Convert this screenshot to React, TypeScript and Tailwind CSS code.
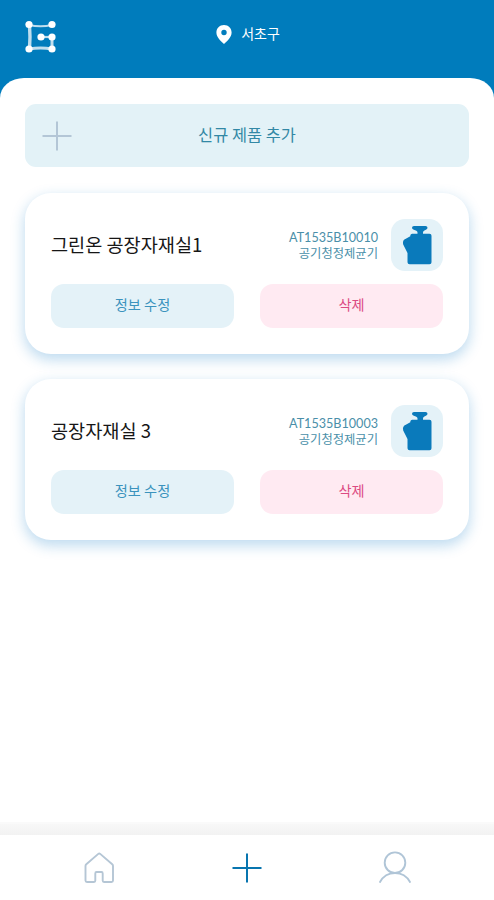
import React from 'react';

interface Product {
  name: string;
  serial: string;
  category: string;
}

const products: Product[] = [
  { name: '그린온 공장자재실1', serial: 'AT1535B10010', category: '공기청정제균기' },
  { name: '공장자재실 3', serial: 'AT1535B10003', category: '공기청정제균기' },
];

const Logo = () => (
  <svg width="34" height="38" viewBox="0 0 34 38" className="block">
    <g fill="none" stroke="#fff" strokeOpacity="0.75">
      <path d="M6 7Q17.500 9.500 29 7" strokeWidth="2.200" />
      <path d="M6.500 7Q7.500 19 6.500 31" strokeWidth="3.400" />
      <path d="M6 31Q17.500 29 29 31" strokeWidth="3" />
      <path d="M29 31V19" strokeWidth="3" />
      <path d="M18 19H29" strokeWidth="2.200" />
    </g>
    <g fill="#fff">
      <circle cx="6" cy="6.500" r="3.600" />
      <circle cx="29" cy="6.500" r="3.600" />
      <circle cx="6" cy="31" r="3.600" />
      <circle cx="29" cy="31" r="3.600" />
      <circle cx="18" cy="19" r="3.600" />
      <circle cx="29" cy="19" r="3.600" />
    </g>
  </svg>
);

const PinIcon = () => (
  <svg width="16" height="19" viewBox="0 0 16 19" className="block">
    <path
      fill="#fff"
      fillRule="evenodd"
      d="M8 0C3.5 0 .4 3.3.4 7.5.4 12 4.5 16 8 19c3.500-3 7.600-7 7.600-11.500C15.600 3.300 12.500 0 8 0Zm0 4.800a2.700 2.700 0 1 1 0 5.400 2.700 2.700 0 0 1 0-5.400Z"
    />
  </svg>
);

const PlusIcon = ({ color, width }: { color: string; width: number }) => (
  <svg width="30" height="30" viewBox="0 0 30 30" className="block">
    <path d="M15 .5v29M.5 15h29" stroke={color} strokeWidth={width} fill="none" />
  </svg>
);

const PurifierIcon = () => (
  <svg width="52" height="52" viewBox="0 0 52 52" className="block">
    <path
      fill="#0a7abb"
      d="M23 7H34.500Q36.500 7 36.500 8.800Q36.500 9.800 35.300 10.500L33 11.800Q32 12.400 32 13.500V14.800H38.500Q40.500 14.800 40.500 16.800V43.300Q40.500 45.300 38.500 45.300H18.700Q16.500 45.300 16.500 43.200V34L12.200 25.500Q11.500 22.500 13 20.800L19.300 17.200V16.500Q19.500 14.800 21.200 14.800H26.500V13.500Q26.500 12.400 25.300 11.800L22.300 10.500Q21 9.800 21 8.800Q21 7 23 7Z"
    />
  </svg>
);

const HomeIcon = () => (
  <svg width="32" height="32" viewBox="0 0 32 32" className="block">
    <path
      d="M3.300 12.300Q2.500 13 2.500 14V28.500Q2.500 30 4 30H11Q12.300 30 12.300 28.500V21.500Q12.300 20 13.500 20H18.500Q19.700 20 19.700 21.500V28.500Q19.700 30 21 30H28.500Q30 30 30 28.500V14Q30 13 29.200 12.300L17.200 1.900Q16.200 1.100 15.300 1.900Z"
      fill="none"
      stroke="#b5c6d5"
      strokeWidth="1.900"
      strokeLinejoin="round"
    />
  </svg>
);

const UserIcon = () => (
  <svg width="34" height="34" viewBox="0 0 34 34" className="block">
    <g fill="none" stroke="#b0c5d7" strokeWidth="1.900" strokeLinecap="round">
      <circle cx="17" cy="11.700" r="10.300" />
      <path d="M2 31C8.500 19.200 25.500 19.200 32 31" />
    </g>
  </svg>
);

const ProductCard = ({ product }: { product: Product }) => (
  <article className="h-[161px] rounded-[26px] bg-white px-[26px] pt-[26px] shadow-[0_5px_13px_1px_rgba(30,130,200,0.28)]">
    <div className="flex h-[52px] items-center">
      <h2 className="flex-1 whitespace-nowrap pb-[3px] text-[18.600px] leading-6 text-[#161616]">{product.name}</h2>
      <div className="mr-[13px] text-right text-[#4a8fa9]">
        <p className="pt-px font-['Lato',sans-serif] text-[12.600px] leading-4">{product.serial}</p>
        <p className="-mt-px text-[12.300px] leading-4">{product.category}</p>
      </div>
      <div className="h-[52px] w-[52px] rounded-[14px] bg-[#e4f2f8]">
        <PurifierIcon />
      </div>
    </div>
    <div className="mt-[13px] grid grid-cols-2 gap-[26px]">
      <button type="button" className="h-11 rounded-[13px] bg-[#e4f2f8] pb-0.5 text-[14.200px] text-[#3b93bd]">
        정보 수정
      </button>
      <button type="button" className="h-11 rounded-[13px] bg-[#ffeaf2] pb-0.5 text-[14.200px] text-[#dc4a83]">
        삭제
      </button>
    </div>
  </article>
);

export default function App() {
  return (
    <div className="flex h-[900px] w-[494px] flex-col overflow-hidden bg-[#007cbc] font-['Noto_Sans_CJK_KR',sans-serif]">
      <header className="grid h-[78px] shrink-0 grid-cols-3 items-start px-[23px] pt-[18px]">
        <Logo />
        <div className="flex h-8 items-center justify-center gap-[9px] pl-0.5">
          <PinIcon />
          <span className="pb-0.5 text-[14px] text-white">서초구</span>
        </div>
      </header>

      <main className="flex-1 rounded-t-[24px_20px] bg-white px-[25px] pt-[26px]">
        <button
          type="button"
          className="grid h-[63px] w-full grid-cols-[30px_1fr_30px] items-center rounded-[11px] bg-[#e3f2f7] px-[17px]"
        >
          <PlusIcon color="#b3c6d6" width={2} />
          <span className="pb-[3px] text-[16.400px] text-[#3288a5]">신규 제품 추가</span>
        </button>

        <section className="mt-[26px] flex flex-col gap-[25px]">
          {products.map((product) => (
            <ProductCard key={product.serial} product={product} />
          ))}
        </section>
      </main>

      <div className="h-[13px] shrink-0 border-t-2 border-[#fafafa] bg-linear-to-b from-[#f8f8f8] to-[#f2f2f2]" />
      <nav className="grid h-[65px] shrink-0 grid-cols-3 items-center justify-items-center bg-white px-[25px]">
        <HomeIcon />
        <PlusIcon color="#0875af" width={2} />
        <UserIcon />
      </nav>
    </div>
  );
}
